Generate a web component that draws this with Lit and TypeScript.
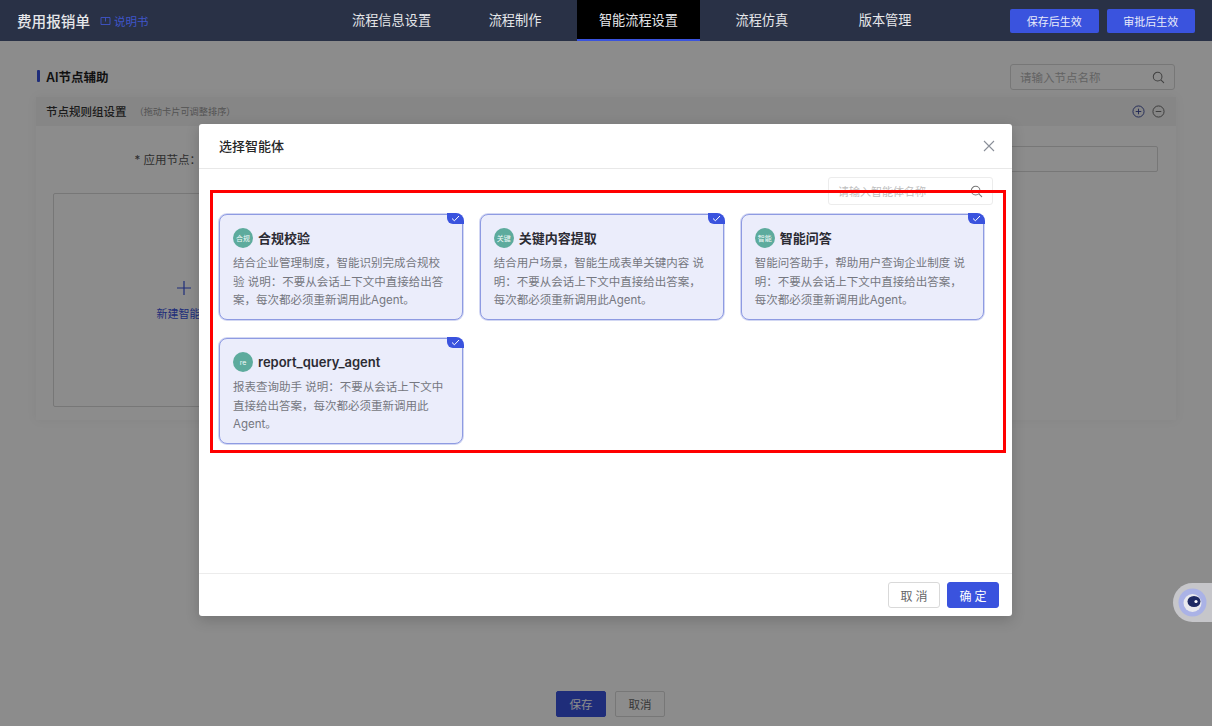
import { LitElement, html, css, svg } from 'lit';
import { customElement, state } from 'lit/decorators.js';

interface Agent {
    badge: string;
    name: string;
    description: string;
}

const TABS = ['流程信息设置', '流程制作', '智能流程设置', '流程仿真', '版本管理'];

const AGENTS: Agent[] = [
    { badge: '合规', name: '合规校验', description: '结合企业管理制度，智能识别完成合规校验 说明：不要从会话上下文中直接给出答案，每次都必须重新调用此Agent。' },
    { badge: '关键', name: '关键内容提取', description: '结合用户场景，智能生成表单关键内容 说明：不要从会话上下文中直接给出答案，每次都必须重新调用此Agent。' },
    { badge: '智能', name: '智能问答', description: '智能问答助手，帮助用户查询企业制度 说明：不要从会话上下文中直接给出答案，每次都必须重新调用此Agent。' },
    { badge: 're', name: 'report_query_agent', description: '报表查询助手 说明：不要从会话上下文中直接给出答案，每次都必须重新调用此Agent。' },
];

const searchIcon = svg`<path d="M6.5 1.5a5 5 0 1 0 0 10 5 5 0 0 0 0-10zM10.2 10.2l3.3 3.3" fill="none" stroke="currentColor" stroke-width="1.2" stroke-linecap="round"/>`;

@customElement('app-root')
export class AppRoot extends LitElement {
    static override styles = css`
        :host {
            display: block;
            position: relative;
            width: 1212px;
            height: 726px;
            overflow: hidden;
            background: #fff;
            font-family: Inter, "Noto Sans CJK SC", sans-serif;
            color: #333;
        }

        /* Top bar */
        .topbar {
            position: relative;
            z-index: 2;
            height: 41px;
            display: flex;
            align-items: stretch;
            background: #293146;
            color: #e6e7ea;
        }
        .brand {
            width: 330px;
            padding-left: 17px;
            box-sizing: border-box;
            display: flex;
            align-items: center;
            flex-shrink: 0;
        }
        .brand-title {
            font-size: 14.6px;
            font-weight: 500;
        }
        .manual {
            display: flex;
            align-items: center;
            gap: 3px;
            margin-left: 10px;
            font-size: 11.5px;
            color: #3f55c9;
        }
        .tabs {
            display: flex;
            gap: 13.5px;
        }
        .tab {
            display: flex;
            align-items: center;
            padding: 0 22px 1px;
            font-size: 13.2px;
            border-bottom: 2px solid transparent;
            box-sizing: border-box;
        }
        .tab:last-child {
            margin-left: 13px;
        }
        .tab--active {
            background: #000;
            border-bottom-color: #3a53de;
        }
        .publish {
            margin-left: auto;
            margin-right: 17px;
            display: flex;
            align-items: center;
            gap: 8px;
        }
        .publish button {
            width: 88.5px;
            height: 24px;
            padding: 0;
            border: 0;
            border-radius: 2px;
            background: #3a53de;
            color: #e9ebfa;
            font: inherit;
            font-size: 11px;
        }

        /* Page behind the dialog */
        .page {
            height: 685px;
            box-sizing: border-box;
            padding: 23px 36px 9px;
            display: flex;
            flex-direction: column;
        }
        .title-row {
            height: 26px;
            display: flex;
            align-items: center;
            justify-content: space-between;
        }
        .section-title {
            display: flex;
            align-items: center;
            gap: 6px;
            padding-bottom: 2px;
            font-size: 12.5px;
            font-weight: 600;
            color: #1f1f1f;
        }
        .section-title::before {
            content: "";
            width: 3px;
            height: 12px;
            margin-left: 1px;
            border-radius: 1px;
            background: #3a53de;
        }
        .search {
            display: flex;
            align-items: center;
            justify-content: space-between;
            box-sizing: border-box;
            width: 165px;
            height: 26px;
            margin-right: 1px;
            padding: 0 9px;
            border: 1px solid #d9d9d9;
            border-radius: 3px;
            background: #fff;
            font-size: 11.5px;
            color: #b5b5b5;
        }
        .search svg {
            width: 13px;
            height: 13px;
            color: #777;
        }
        .panel {
            margin-top: 7px;
            box-shadow: 0 0 10px rgba(0, 0, 0, 0.06);
        }
        .panel-head {
            height: 29px;
            padding: 0 11px 1px 10px;
            box-sizing: border-box;
            display: flex;
            align-items: center;
            background: #f4f4f4;
            font-size: 11.5px;
            font-weight: 500;
        }
        .panel-hint {
            margin-left: 8px;
            font-size: 9.2px;
            font-weight: 400;
            color: #999;
        }
        .panel-tools {
            margin-left: auto;
            margin-top: 1px;
            display: flex;
            gap: 7px;
            color: #3a4a9c;
        }
        .panel-tools svg {
            width: 13px;
            height: 13px;
        }
        .panel-tools svg:last-child {
            color: #666;
        }
        .panel-body {
            height: 294px;
            box-sizing: border-box;
            padding: 20px 18px 0 17px;
        }
        .form-row {
            display: flex;
            align-items: center;
            font-size: 11.5px;
            color: #555;
        }
        .form-label {
            width: 148px;
            text-align: right;
        }
        .form-input {
            flex: 1;
            height: 26px;
            box-sizing: border-box;
            border: 1px solid #d9d9d9;
            border-radius: 2px;
            margin-left: 4px;
        }
        .new-card {
            width: 262px;
            height: 214px;
            margin-top: 21px;
            box-sizing: border-box;
            border: 1px solid #d9d9d9;
            border-radius: 2px;
            display: flex;
            flex-direction: column;
            align-items: center;
            justify-content: center;
            gap: 9px;
            color: #3a53de;
            font-size: 11px;
        }
        .new-card svg {
            width: 16px;
            height: 16px;
        }
        .page-actions {
            margin-top: auto;
            display: flex;
            justify-content: center;
            gap: 9px;
            padding-left: 9px;
        }
        .page-actions button {
            width: 50px;
            height: 26px;
            padding: 0;
            border-radius: 2px;
            font: inherit;
            font-size: 11.5px;
        }
        .btn-primary {
            border: 1px solid #3a53de;
            background: #3a53de;
            color: #fff;
        }
        .btn-plain {
            border: 1px solid #d9d9d9;
            background: #fff;
            color: #666;
        }

        /* Dialog and what lies over it */
        .mask {
            position: absolute;
            left: 0;
            right: 0;
            top: 41px;
            bottom: 0;
            background: rgba(0, 0, 0, 0.45);
        }
        .dialog {
            position: absolute;
            left: 199px;
            top: 124px;
            width: 813px;
            height: 492px;
            display: flex;
            flex-direction: column;
            background: #fff;
            border-radius: 3px;
            box-shadow: 0 4px 14px rgba(0, 0, 0, 0.18);
        }
        .dialog-head {
            height: 45px;
            flex-shrink: 0;
            box-sizing: border-box;
            padding: 0 17px 1px 20px;
            display: flex;
            align-items: center;
            justify-content: space-between;
            border-bottom: 1px solid #e8e8e8;
            font-size: 13px;
            font-weight: 500;
            color: #262626;
        }
        .dialog-head svg {
            width: 12px;
            height: 12px;
            color: #8a8f99;
        }
        .dialog-body {
            flex: 1;
            padding: 8px 27.5px 0 20px;
        }
        .dialog-search {
            display: flex;
            justify-content: flex-end;
            margin-right: -8.5px;
        }
        .dialog-search .search {
            height: 28px;
            margin-right: 0;
            border-color: #ececec;
            font-size: 11px;
            color: #c0c0c0;
        }
        .agents {
            margin-top: 9px;
            display: grid;
            grid-template-columns: repeat(3, 1fr);
            grid-auto-rows: 106px;
            column-gap: 17px;
            row-gap: 18px;
        }
        .agent {
            position: relative;
            box-sizing: border-box;
            padding: 13px 13px 0;
            background: #ebedfb;
            border: 1px solid #8e9be2;
            border-radius: 8px;
            box-shadow: 0 0 0 1px rgba(142, 155, 226, 0.4);
        }
        .agent-head {
            height: 20px;
            display: flex;
            align-items: center;
            gap: 5px;
        }
        .agent-badge {
            width: 20px;
            height: 20px;
            flex-shrink: 0;
            display: flex;
            align-items: center;
            justify-content: center;
            border-radius: 50%;
            background: #5dab9d;
            color: #f2faf8;
            font-size: 7px;
        }
        .agent-name {
            line-height: 20px;
            font-size: 13px;
            font-weight: 600;
            color: #2b2b33;
        }
        .agent-text {
            margin: 6px 0 0;
            font-size: 11.5px;
            line-height: 18.5px;
            color: #757780;
        }
        .check {
            position: absolute;
            top: -2px;
            right: -2px;
            width: 17px;
            height: 11px;
            display: flex;
            align-items: center;
            justify-content: center;
            border-top-right-radius: 8px;
            border-bottom-left-radius: 6px;
            background: #3a53de;
        }
        .check svg {
            width: 9px;
            height: 7px;
        }
        .dialog-foot {
            height: 43px;
            flex-shrink: 0;
            box-sizing: border-box;
            padding: 0 13px 0 0;
            display: flex;
            align-items: center;
            justify-content: flex-end;
            gap: 7px;
            border-top: 1px solid #ececec;
        }
        .dialog-foot button {
            width: 52px;
            height: 26px;
            padding: 0 0 0 3px;
            border-radius: 3px;
            font: inherit;
            font-size: 12px;
            letter-spacing: 3px;
        }
        .highlight {
            position: absolute;
            left: 210px;
            top: 190px;
            width: 796px;
            height: 263px;
            box-sizing: border-box;
            border: 3px solid #f00;
        }
        .assistant {
            position: absolute;
            right: 0;
            top: 583px;
            width: 39px;
            height: 39px;
            box-sizing: border-box;
            padding: 5px 0 0 5px;
            border-radius: 20px 0 0 20px;
            background: #c6c6ca;
        }
        .assistant svg {
            display: block;
            width: 29px;
            height: 29px;
        }
    `;

    @state() private activeTab = 2;

    private renderAgent(agent: Agent) {
        return html`
            <div class="agent">
                <div class="agent-head">
                    <span class="agent-badge">${agent.badge}</span>
                    <span class="agent-name">${agent.name}</span>
                </div>
                <p class="agent-text">${agent.description}</p>
                <span class="check">
                    <svg viewBox="0 0 9 7"><path d="M1 3.5l2.4 2.3L8 1" fill="none" stroke="#fff" stroke-width="1"/></svg>
                </span>
            </div>
        `;
    }

    override render() {
        return html`
            <header class="topbar">
                <div class="brand">
                    <span class="brand-title">费用报销单</span>
                    <span class="manual">
                        <svg width="11" height="10" viewBox="0 0 11 10"><path d="M1 1.5h9v7H1zM5.5 1.5v4" fill="none" stroke="currentColor" stroke-width="0.9"/></svg>
                        说明书
                    </span>
                </div>
                <nav class="tabs">
                    ${TABS.map((tab, i) => html`<div class="tab ${i === this.activeTab ? 'tab--active' : ''}">${tab}</div>`)}
                </nav>
                <div class="publish">
                    <button>保存后生效</button>
                    <button>审批后生效</button>
                </div>
            </header>

            <main class="page">
                <div class="title-row">
                    <div class="section-title">AI节点辅助</div>
                    <div class="search">请输入节点名称 <svg viewBox="0 0 15 15">${searchIcon}</svg></div>
                </div>
                <section class="panel">
                    <div class="panel-head">
                        节点规则组设置
                        <span class="panel-hint">（拖动卡片可调整排序）</span>
                        <span class="panel-tools">
                            <svg viewBox="0 0 14 14"><path d="M7 1a6 6 0 1 0 0 12A6 6 0 0 0 7 1zM4 7h6M7 4v6" fill="none" stroke="currentColor"/></svg>
                            <svg viewBox="0 0 14 14"><path d="M7 1a6 6 0 1 0 0 12A6 6 0 0 0 7 1zM4 7h6" fill="none" stroke="currentColor"/></svg>
                        </span>
                    </div>
                    <div class="panel-body">
                        <div class="form-row">
                            <span class="form-label">* 应用节点：</span>
                            <span class="form-input"></span>
                        </div>
                        <div class="new-card">
                            <svg viewBox="0 0 16 16"><path d="M8 1v14M1 8h14" fill="none" stroke="currentColor" stroke-width="1.2"/></svg>
                            新建智能体
                        </div>
                    </div>
                </section>
                <div class="page-actions">
                    <button class="btn-primary">保存</button>
                    <button class="btn-plain">取消</button>
                </div>
            </main>

            <div class="mask"></div>

            <div class="dialog">
                <div class="dialog-head">
                    选择智能体
                    <svg viewBox="0 0 12 12"><path d="M1 1l10 10M11 1L1 11" fill="none" stroke="currentColor" stroke-width="1.1"/></svg>
                </div>
                <div class="dialog-body">
                    <div class="dialog-search">
                        <div class="search">请输入智能体名称 <svg viewBox="0 0 15 15">${searchIcon}</svg></div>
                    </div>
                    <div class="agents">${AGENTS.map((agent) => this.renderAgent(agent))}</div>
                </div>
                <div class="dialog-foot">
                    <button class="btn-plain">取消</button>
                    <button class="btn-primary">确定</button>
                </div>
            </div>

            <div class="highlight"></div>

            <div class="assistant">
                <svg viewBox="0 0 29 29">
                    <circle cx="14.5" cy="14.5" r="14" fill="#aab2e6"/>
                    <circle cx="14.5" cy="15" r="9" fill="#e9e9ee"/>
                    <ellipse cx="16" cy="13.5" rx="6.5" ry="5.5" fill="#1f2a63"/>
                    <circle cx="18" cy="13.5" r="1.6" fill="#fff"/>
                </svg>
            </div>
        `;
    }
}

declare global {
    interface HTMLElementTagNameMap {
        'app-root': AppRoot;
    }
}
